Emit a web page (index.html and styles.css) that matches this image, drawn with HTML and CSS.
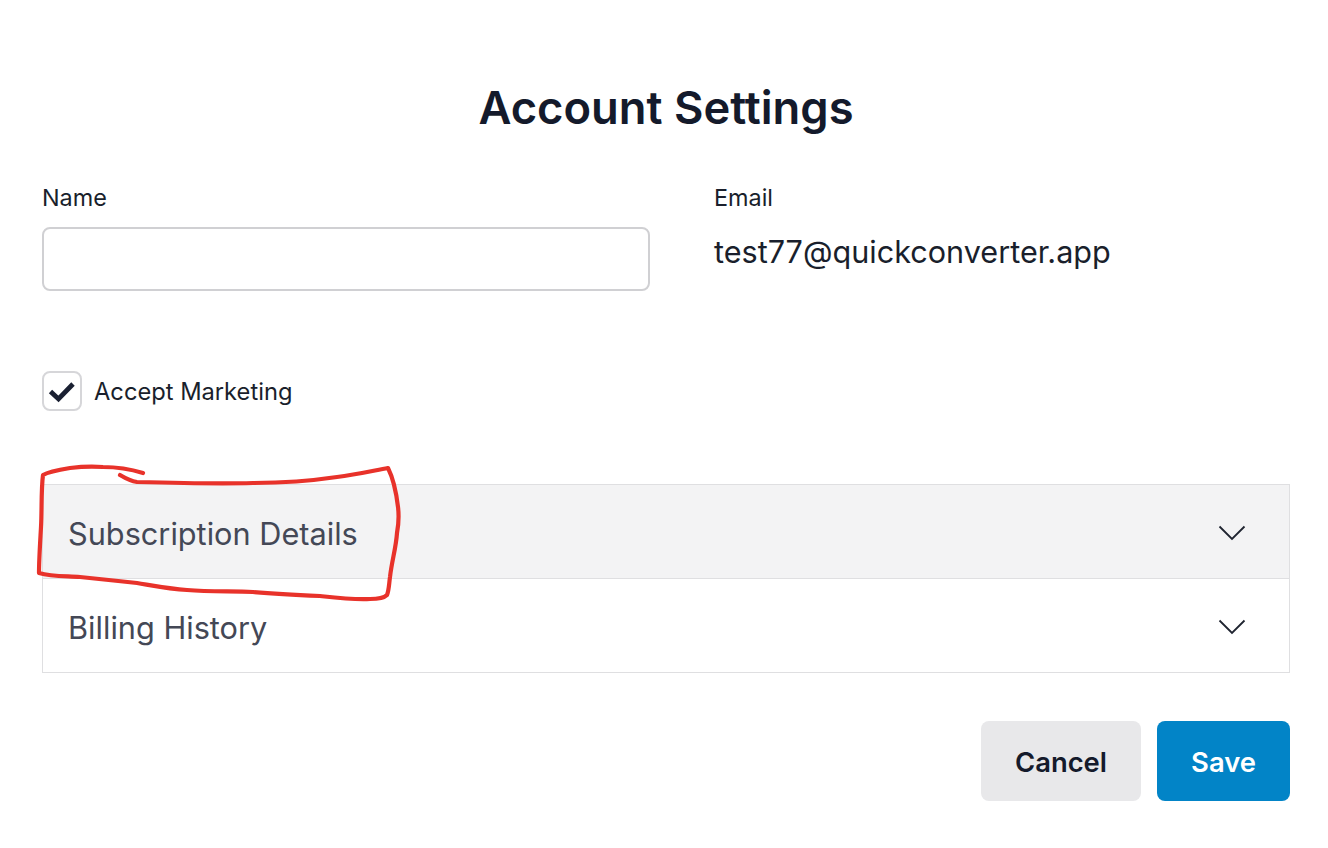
FILE: index.html
```html
<!DOCTYPE html>
<html lang="en">
<head>
<meta charset="utf-8">
<title>Account Settings</title>
<link rel="stylesheet" href="styles.css">
</head>
<body>
<main class="page">
  <h1 class="title">Account Settings</h1>
  <div class="fields">
    <div class="field">
      <label class="label" for="name">Name</label>
      <input class="input" id="name" type="text">
    </div>
    <div class="field">
      <span class="label">Email</span>
      <span class="email">test77@quickconverter.app</span>
    </div>
  </div>
  <div class="marketing">
    <span class="checkbox">
      <svg width="28" height="24" viewBox="0 0 28 24"><path d="M2.500 12.500l8 7.500L25 5" fill="none" stroke="#1a2032" stroke-width="4.800"/></svg>
    </span>
    <span class="check-label">Accept Marketing</span>
  </div>
  <div class="accordion">
    <div class="row row-active">
      <span class="row-text">Subscription Details</span>
      <svg class="chev" width="28" height="16" viewBox="0 0 28 16"><path d="M1.5 1.5L14 14 26.500 1.500" fill="none" stroke="#1f2430" stroke-width="1.800"/></svg>
    </div>
    <div class="row">
      <span class="row-text">Billing History</span>
      <svg class="chev" width="28" height="16" viewBox="0 0 28 16"><path d="M1.5 1.5L14 14 26.500 1.500" fill="none" stroke="#1f2430" stroke-width="1.800"/></svg>
    </div>
  </div>
  <div class="actions">
    <button class="btn btn-cancel" type="button">Cancel</button>
    <button class="btn btn-save" type="button">Save</button>
  </div>
</main>
<svg class="scribble" width="1328" height="848" viewBox="0 0 1328 848"><path d="M143 473C130 469 116 467 103 467C90 466 78 467 70 468C58 470 48 472 43 475C41 490 42 510 41 527C40 545 39 560 39 573C52 577 66 576 80 577C100 579 118 581 137 583C155 586 170 589 187 590C210 592 232 591 253 592C277 594 298 595 320 596C338 598 355 600 370 599C378 599 384 598 387 595C389 590 389 584 390 577C392 560 396 548 397 533C399 522 399 515 398 507C396 490 392 476 388 468C372 471 355 475 337 477C310 481 282 483 253 483C215 484 175 483 137 482C130 481 125 478 120 475" fill="none" stroke="#e8322a" stroke-width="4.200" stroke-linecap="round" stroke-linejoin="round"/></svg>
</body>
</html>
```
FILE: styles.css
```css
* { box-sizing: border-box; }
html, body { margin: 0; height: 100%; }
body {
  background: #fff;
  font-family: Inter, "Liberation Sans", sans-serif;
  color: #111827;
  overflow: hidden;
}
.page {
  width: 1328px;
  height: 848px;
  padding: 78px 38px 0 42px;
}
.title {
  margin: 0;
  font-size: 45.3px;
  line-height: 60px;
  font-weight: 600;
  text-align: center;
  color: #141a2b;
}
.fields {
  display: grid;
  grid-template-columns: 608px 1fr;
  column-gap: 64px;
  margin-top: 44px;
}
.field { display: flex; flex-direction: column; }
.label {
  font-size: 23.4px;
  line-height: 32px;
  color: #1a1f2c;
  margin-bottom: 13px;
}
.input {
  height: 64px;
  width: 100%;
  border: 2px solid #d0d0d3;
  border-radius: 8px;
  background: #fff;
}
.email {
  padding-top: 3px;
  font-size: 30.6px;
  line-height: 44px;
  color: #1a1f2c;
}
.marketing {
  display: flex;
  align-items: center;
  gap: 12px;
  margin-top: 79px;
}
.checkbox {
  width: 40px;
  height: 40px;
  border: 2px solid #d6d6d9;
  border-radius: 8px;
  display: flex;
  align-items: center;
  justify-content: center;
}
.check-label { padding-top: 2px; font-size: 23.7px; line-height: 40px; color: #1a1f2c; }
.accordion {
  margin-top: 72px;
  width: 1248px;
  border: 1px solid #dfdfe1;
}
.row {
  height: 93px;
  padding: 0 43px 0 25px;
  display: flex;
  align-items: center;
  justify-content: space-between;
  font-size: 30.7px;
  color: #444856;
}
.row-text { padding-top: 4px; }
.chev { margin-top: 2px; }
.row + .row { border-top: 1px solid #dfdfe1; height: 94px; }
.row-active { background: #f3f3f4; }
.actions {
  display: flex;
  justify-content: flex-end;
  gap: 16px;
  margin-top: 48px;
  width: 1248px;
}
.btn {
  height: 80px;
  padding: 2px 0 0;
  border: 0;
  border-radius: 8px;
  font-family: inherit;
  font-size: 27.4px;
  font-weight: 600;
}
.btn-cancel { width: 160px; background: #e8e8ea; color: #141a2b; }
.btn-save { width: 133px; background: #0284c7; color: #fff; }
.scribble { position: absolute; left: 0; top: 0; pointer-events: none; }
```
